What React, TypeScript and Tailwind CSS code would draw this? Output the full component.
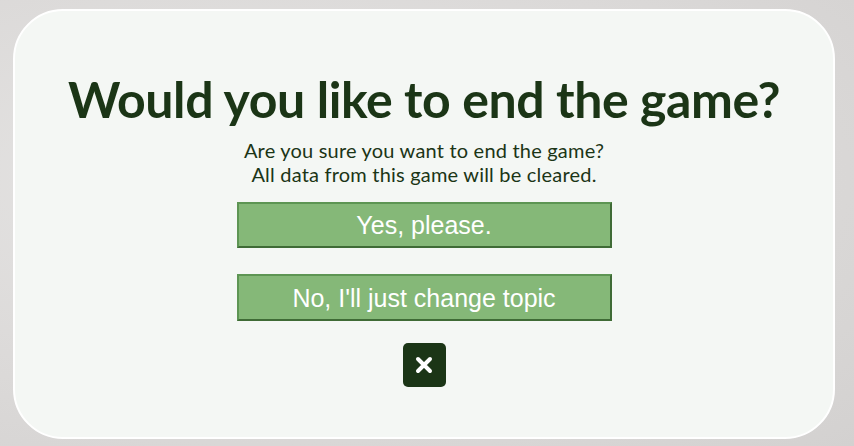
export default function App() {
  return (
    <div className="w-[854px] h-[446px] bg-[radial-gradient(ellipse_at_30%_40%,#e6e5e4_0%,#dbd9d8_60%,#d3d1d0_100%)] overflow-hidden pt-[9px] pl-[13px]">
      <div className="w-[822px] h-[430px] rounded-[50px] border-[2px] border-white bg-[#f4f7f4] flex flex-col items-center font-[Lato,'Noto_Sans',sans-serif] text-[#1b3516]">
        <h1 className="mt-[66px] text-[50px] leading-[44px] font-bold tracking-[-0.4px]">
          Would you like to end the game?
        </h1>
        <div className="mt-[17px] text-center text-[20px] leading-[24px] tracking-[0.2px]">
          <p>Are you sure you want to end the game?</p>
          <p>All data from this game will be cleared.</p>
        </div>
        <button className="mt-[16px] w-[375px] h-[46px] pt-[2px] bg-[#85b878] text-white text-[25px] border-[2px] border-t-[#5d9553] border-l-[#5d9553] border-r-[#3f6b36] border-b-[#3f6b36] font-['Liberation_Sans',Arial,sans-serif]">
          Yes, please.
        </button>
        <button className="mt-[26px] w-[375px] h-[47px] pt-[2px] bg-[#85b878] text-white text-[25px] border-[2px] border-t-[#5d9553] border-l-[#5d9553] border-r-[#3f6b36] border-b-[#3f6b36] font-['Liberation_Sans',Arial,sans-serif]">
          No, I'll just change topic
        </button>
        <button className="mt-[22px] w-[43px] h-[44px] rounded-[5px] bg-[#1b3516] flex items-center justify-center">
          <svg width="18" height="18" viewBox="0 0 18 18">
            <path d="M3 3 L15 15 M15 3 L3 15" stroke="white" strokeWidth="4" strokeLinecap="round" />
          </svg>
        </button>
      </div>
    </div>
  );
}
